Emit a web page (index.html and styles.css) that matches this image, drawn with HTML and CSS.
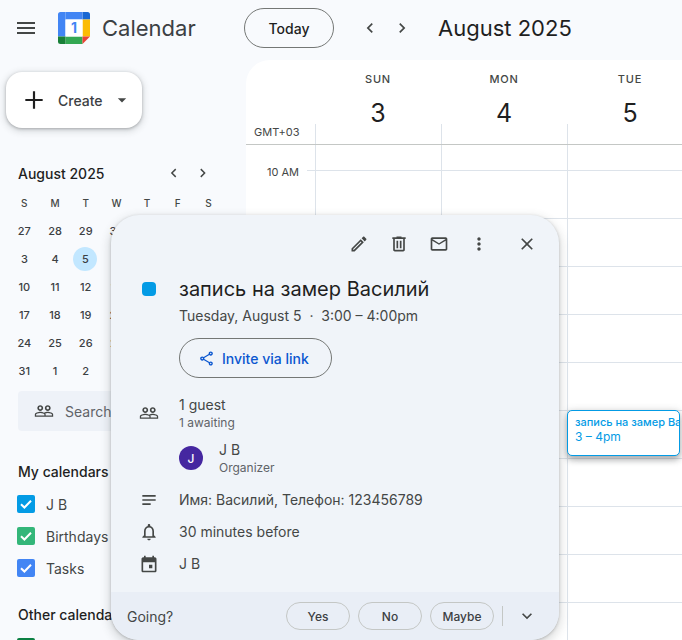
FILE: index.html
```html
<!DOCTYPE html>
<html lang="en">
<head>
  <meta charset="UTF-8" />
  <title>Calendar – August 2025</title>
  <link rel="stylesheet" href="styles.css">
</head>
<body>

  <header class="topbar">
    <button class="icon-btn menu-btn"><svg class="icon" viewBox="0 0 24 24"><path d="M3 18h18v-2H3v2zm0-5h18v-2H3v2zm0-7v2h18V6H3z"/></svg></button>
    <svg class="logo" viewBox="0 0 32 32">
      <path fill="#4285f4" d="M2.5 0H7.5V24.5H0V2.5A2.5 2.5 0 0 1 2.5 0z"/>
      <path fill="#1967d2" d="M24.5 0h5A2.5 2.5 0 0 1 32 2.5V7.5H24.5z"/>
      <rect fill="#4285f4" x="7.5" width="17" height="7.5"/>
      <rect fill="#fbbc04" x="24.5" y="7.5" width="7.5" height="17"/>
      <rect fill="#34a853" x="7.5" y="24.5" width="17" height="7.5"/>
      <path fill="#188038" d="M0 24.5H7.5V32H2.5A2.5 2.5 0 0 1 0 29.5z"/>
      <path fill="#ea4335" d="M24.5 24.5H32L24.5 32z"/>
      <rect fill="#fff" x="7.5" y="7.5" width="17" height="17"/>
      <text class="logo-num" x="16" y="21">1</text>
    </svg>
    <span class="brand">Calendar</span>
    <button class="today-btn">Today</button>
    <button class="icon-btn nav-btn"><svg class="icon" viewBox="0 0 24 24"><path d="M15.41 7.41L14 6l-6 6 6 6 1.41-1.41L10.83 12z"/></svg></button>
    <button class="icon-btn nav-btn"><svg class="icon" viewBox="0 0 24 24"><path d="M10 6L8.59 7.41 13.17 12l-4.58 4.59L10 18l6-6z"/></svg></button>
    <span class="period">August 2025</span>
  </header>

  <div class="layout">
    <aside class="sidebar">
      <button class="create-btn">
        <svg class="plus" viewBox="0 0 24 24"><path d="M20 13h-7v7h-2v-7H4v-2h7V4h2v7h7z"/></svg>
        <span>Create</span>
        <svg class="caret" viewBox="0 0 24 24"><path d="M7 10l5 5 5-5z"/></svg>
      </button>

      <div class="mini-head">
        <span class="mini-title">August 2025</span>
        <svg class="mini-nav" viewBox="0 0 24 24"><path d="M15.41 7.41L14 6l-6 6 6 6 1.41-1.41L10.83 12z"/></svg>
        <svg class="mini-nav" viewBox="0 0 24 24"><path d="M10 6L8.59 7.41 13.17 12l-4.58 4.59L10 18l6-6z"/></svg>
      </div>
      <div class="mini-grid">
        <span class="dow">S</span><span class="dow">M</span><span class="dow">T</span><span class="dow">W</span><span class="dow">T</span><span class="dow">F</span><span class="dow">S</span>
        <span>27</span><span>28</span><span>29</span><span>30</span><span>31</span><span>1</span><span>2</span>
        <span>3</span><span>4</span><span class="picked">5</span><span>6</span><span>7</span><span>8</span><span>9</span>
        <span>10</span><span>11</span><span>12</span><span>13</span><span>14</span><span>15</span><span>16</span>
        <span>17</span><span>18</span><span>19</span><span>20</span><span>21</span><span>22</span><span>23</span>
        <span>24</span><span>25</span><span>26</span><span>27</span><span>28</span><span>29</span><span>30</span>
        <span>31</span><span>1</span><span>2</span><span>3</span><span>4</span><span>5</span><span>6</span>
      </div>

      <div class="people-search">
        <svg class="icon" viewBox="0 0 24 24"><use href="#people"/></svg>
        <span>Search for people</span>
      </div>

      <h3 class="cal-title">My calendars</h3>
      <label class="cal-item"><span class="check c-blue"><svg viewBox="0 0 18 18"><path d="M4 9.2l3.4 3.3L14 5.8"/></svg></span>J B</label>
      <label class="cal-item"><span class="check c-green"><svg viewBox="0 0 18 18"><path d="M4 9.2l3.4 3.3L14 5.8"/></svg></span>Birthdays</label>
      <label class="cal-item"><span class="check c-task"><svg viewBox="0 0 18 18"><path d="M4 9.2l3.4 3.3L14 5.8"/></svg></span>Tasks</label>

      <h3 class="cal-title other">Other calendars</h3>
      <label class="cal-item"><span class="check c-dark"><svg viewBox="0 0 18 18"><path d="M4 9.2l3.4 3.3L14 5.8"/></svg></span>Holidays</label>
    </aside>

    <main class="week">
      <div class="day-heads">
        <div class="day-head"><span class="dow-name">SUN</span><span class="day-num">3</span></div>
        <div class="day-head"><span class="dow-name">MON</span><span class="day-num">4</span></div>
        <div class="day-head"><span class="dow-name">TUE</span><span class="day-num">5</span></div>
      </div>
      <div class="allday">
        <span class="tz">GMT+03</span>
        <div class="cell"></div><div class="cell"></div><div class="cell"></div>
      </div>
      <div class="stub">
        <div class="cell"></div><div class="cell"></div><div class="cell"></div>
      </div>
      <div class="hour"><span class="hour-label">10 AM</span><div class="tick"></div><div class="cell"></div><div class="cell"></div><div class="cell"></div></div>
      <div class="hour"><span class="hour-label"></span><div class="tick"></div><div class="cell"></div><div class="cell"></div><div class="cell"></div></div>
      <div class="hour"><span class="hour-label"></span><div class="tick"></div><div class="cell"></div><div class="cell"></div><div class="cell"></div></div>
      <div class="hour"><span class="hour-label"></span><div class="tick"></div><div class="cell"></div><div class="cell"></div><div class="cell"></div></div>
      <div class="hour"><span class="hour-label"></span><div class="tick"></div><div class="cell"></div><div class="cell"></div><div class="cell"></div></div>
      <div class="hour"><span class="hour-label"></span><div class="tick"></div><div class="cell"></div><div class="cell"></div><div class="cell"></div></div>
      <div class="hour"><span class="hour-label"></span><div class="tick"></div><div class="cell"></div><div class="cell"></div><div class="cell"></div></div>
      <div class="hour"><span class="hour-label"></span><div class="tick"></div><div class="cell"></div><div class="cell"></div><div class="cell"></div></div>
      <div class="hour"><span class="hour-label"></span><div class="tick"></div><div class="cell"></div><div class="cell"></div><div class="cell"></div></div>
      <div class="hour"><span class="hour-label"></span><div class="tick"></div><div class="cell"></div><div class="cell"></div><div class="cell"></div></div>
    </main>
  </div>

  <div class="event-chip">
    <div class="chip-title">запись на замер Василий</div>
    <div class="chip-time">3 – 4pm</div>
  </div>

  <section class="popup">
    <div class="popup-tools">
      <svg class="icon" viewBox="0 0 24 24"><path d="M14.06 9.02l.92.92L5.92 19H5v-.92l9.06-9.06M17.66 3c-.25 0-.51.1-.7.29l-1.83 1.83 3.75 3.75 1.83-1.83c.39-.39.39-1.02 0-1.41l-2.34-2.34c-.2-.2-.45-.29-.71-.29zm-3.6 3.19L3 17.25V21h3.75L17.81 9.94l-3.75-3.75z"/></svg>
      <svg class="icon" viewBox="0 0 24 24"><path d="M15 4V3H9v1H4v2h1v13c0 1.1.9 2 2 2h10c1.1 0 2-.9 2-2V6h1V4h-5zm2 15H7V6h10v13zM9 8h2v9H9zm4 0h2v9h-2z"/></svg>
      <svg class="icon" viewBox="0 0 24 24"><path d="M22 6c0-1.1-.9-2-2-2H4c-1.1 0-2 .9-2 2v12c0 1.1.9 2 2 2h16c1.1 0 2-.9 2-2V6zm-2 0l-8 5-8-5h16zm0 12H4V8l8 5 8-5v10z"/></svg>
      <svg class="icon" viewBox="0 0 24 24"><path d="M12 8c1.1 0 2-.9 2-2s-.9-2-2-2-2 .9-2 2 .9 2 2 2zm0 2c-1.1 0-2 .9-2 2s.9 2 2 2 2-.9 2-2-.9-2-2-2zm0 6c-1.1 0-2 .9-2 2s.9 2 2 2 2-.9 2-2-.9-2-2-2z"/></svg>
      <svg class="icon close" viewBox="0 0 24 24"><path d="M19 6.41L17.59 5 12 10.59 6.41 5 5 6.41 10.59 12 5 17.59 6.41 19 12 13.41 17.59 19 19 17.59 13.41 12z"/></svg>
    </div>

    <div class="popup-body">
      <div class="row title-row">
        <div class="row-icon"><span class="color-dot"></span></div>
        <div>
          <h2 class="event-title">запись на замер Василий</h2>
          <p class="event-when">Tuesday, August 5 &nbsp;·&nbsp; 3:00 – 4:00pm</p>
        </div>
      </div>

      <button class="invite-btn">
        <svg viewBox="0 0 24 24"><path d="M18 16.08c-.76 0-1.44.3-1.96.77L8.91 12.7c.05-.23.09-.46.09-.7s-.04-.47-.09-.7l7.05-4.11c.54.5 1.25.81 2.04.81 1.66 0 3-1.34 3-3s-1.34-3-3-3-3 1.34-3 3c0 .24.04.47.09.7L8.04 9.81C7.5 9.31 6.79 9 6 9c-1.66 0-3 1.34-3 3s1.34 3 3 3c.79 0 1.5-.31 2.04-.81l7.12 4.16c-.05.21-.08.43-.08.65 0 1.61 1.31 2.92 2.92 2.92 1.61 0 2.92-1.31 2.92-2.92s-1.31-2.92-2.92-2.92zM18 4c.55 0 1 .45 1 1s-.45 1-1 1-1-.45-1-1 .45-1 1-1zM6 13c-.55 0-1-.45-1-1s.45-1 1-1 1 .45 1 1-.45 1-1 1zm12 7.02c-.55 0-1-.45-1-1s.45-1 1-1 1 .45 1 1-.45 1-1 1z"/></svg>
        Invite via link
      </button>

      <div class="row guests-row">
        <div class="row-icon"><svg class="icon" viewBox="0 0 24 24"><use href="#people"/></svg></div>
        <div>
          <div class="line">1 guest</div>
          <div class="sub">1 awaiting</div>
        </div>
      </div>

      <div class="organizer">
        <span class="avatar">J</span>
        <div>
          <div class="line">J B</div>
          <div class="sub">Organizer</div>
        </div>
      </div>

      <div class="row info-row">
        <div class="row-icon"><svg class="icon" viewBox="0 0 24 24"><path d="M4 6h16v2H4zm0 5h16v2H4zm0 5h10v2H4z"/></svg></div>
        <div class="line">Имя: Василий, Телефон: 123456789</div>
      </div>
      <div class="row info-row">
        <div class="row-icon"><svg class="icon" viewBox="0 0 24 24"><path d="M12 22c1.1 0 2-.9 2-2h-4c0 1.1.9 2 2 2zm6-6v-5c0-3.07-1.63-5.64-4.5-6.32V4c0-.83-.67-1.5-1.5-1.5s-1.5.67-1.5 1.5v.68C7.64 5.36 6 7.92 6 11v5l-2 2v1h16v-1l-2-2zm-2 1H8v-6c0-2.48 1.51-4.5 4-4.5s4 2.02 4 4.5v6z"/></svg></div>
        <div class="line">30 minutes before</div>
      </div>
      <div class="row info-row">
        <div class="row-icon"><svg class="icon" viewBox="0 0 24 24"><path d="M19 4h-1V2h-2v2H8V2H6v2H5c-1.1 0-2 .9-2 2v14c0 1.1.9 2 2 2h14c1.1 0 2-.9 2-2V6c0-1.1-.9-2-2-2zm0 16H5V10h14v10zm-7-7h4v4h-4z"/></svg></div>
        <div class="line">J B</div>
      </div>
    </div>

    <div class="popup-foot">
      <span class="going">Going?</span>
      <button class="rsvp">Yes</button>
      <button class="rsvp">No</button>
      <button class="rsvp">Maybe</button>
      <span class="foot-sep"></span>
      <svg class="icon" viewBox="0 0 24 24"><path d="M16.59 8.59L12 13.17 7.41 8.59 6 10l6 6 6-6z"/></svg>
    </div>
  </section>

  <svg class="defs" aria-hidden="true">
    <symbol id="people" viewBox="0 0 24 24"><path d="M16.5 13c-1.2 0-3.07.34-4.5 1-1.43-.67-3.3-1-4.5-1C5.33 13 1 14.08 1 16.25V19h22v-2.75c0-2.17-4.33-3.25-6.5-3.25zm-4 4.5h-10v-1.25c0-.54 2.56-1.75 5-1.75s5 1.21 5 1.75v1.25zm9 0H14v-1.25c0-.46-.2-.86-.52-1.22.88-.3 1.96-.53 3.02-.53 2.44 0 5 1.21 5 1.75v1.25zM7.5 12c1.93 0 3.5-1.57 3.5-3.5S9.43 5 7.5 5 4 6.57 4 8.5 5.57 12 7.5 12zm0-5c.83 0 1.5.67 1.5 1.5S8.33 10 7.5 10 6 9.33 6 8.5 6.67 7 7.5 7zm9 5c1.93 0 3.5-1.57 3.5-3.5S18.43 5 16.5 5 13 6.57 13 8.5s1.57 3.5 3.5 3.5zm0-5c.83 0 1.5.67 1.5 1.5s-.67 1.5-1.5 1.5S15 9.33 15 8.5 15.67 7 16.5 7z"/></symbol>
  </svg>

</body>
</html>
```

FILE: styles.css
```css
* {
  box-sizing: border-box;
}
html, body {
  height: 640px;
  overflow: hidden;
}
body {
  margin: 0;
  position: relative;
  background-color: #f8fafd;
  color: #1f1f1f;
  font-family: Inter, Roboto, sans-serif;
}
button {
  font-family: inherit;
  background: none;
  border: none;
  padding: 0;
  color: inherit;
}
.defs {
  position: absolute;
  width: 0;
  height: 0;
}
.icon {
  width: 20px;
  height: 20px;
  fill: #444746;
  display: block;
  flex: none;
}

/* top bar */
.topbar {
  height: 60px;
  display: flex;
  align-items: flex-start;
  padding: 8px 0 0 14px;
}
.icon-btn {
  width: 24px;
  height: 40px;
  display: flex;
  align-items: center;
  justify-content: center;
}
.menu-btn .icon {
  width: 24px;
  height: 24px;
}
.logo {
  width: 32px;
  height: 32px;
  margin: 4px 0 0 20px;
  flex: none;
}
.logo-num {
  font-size: 14px;
  font-weight: 700;
  fill: #4285f4;
  text-anchor: middle;
}
.brand {
  margin-left: 12px;
  font-size: 22px;
  line-height: 40px;
  color: #3c4043;
  width: 142px;
}
.today-btn {
  width: 90px;
  height: 40px;
  border: 1px solid #747775;
  border-radius: 20px;
  font-size: 14px;
  font-weight: 500;
  margin-right: 24px;
}
.nav-btn + .nav-btn {
  margin-left: 8px;
}
.period {
  margin-left: 24px;
  font-size: 22px;
  line-height: 40px;
  color: #1f1f1f;
}

.layout {
  display: flex;
  align-items: flex-start;
}

/* sidebar */
.sidebar {
  width: 246px;
  flex: none;
  padding-top: 12px;
}
.create-btn {
  margin-left: 6px;
  width: 136px;
  height: 56px;
  background-color: #fff;
  border-radius: 16px;
  box-shadow: 0 1px 3px rgba(60, 64, 67, .35), 0 2px 6px 2px rgba(60, 64, 67, .15);
  display: flex;
  align-items: center;
  padding-left: 15px;
  font-size: 14px;
  font-weight: 500;
  color: #3c4043;
}
.plus {
  width: 26px;
  height: 26px;
  fill: #1f1f1f;
  margin-right: 11px;
}
.caret {
  width: 20px;
  height: 20px;
  fill: #444746;
  margin-left: 9px;
}
.mini-head {
  display: flex;
  align-items: center;
  width: 224px;
  margin-top: 35px;
  padding-left: 18px;
  height: 20px;
}
.mini-title {
  font-size: 14px;
  font-weight: 500;
  width: 151px;
}
.mini-nav {
  width: 18px;
  height: 18px;
  fill: #444746;
  margin-right: 12px;
}
.mini-grid {
  width: 216px;
  margin: 6px 0 0 9px;
  display: grid;
  grid-template-columns: repeat(7, 30.7px);
  grid-auto-rows: 28px;
  font-size: 11px;
  font-weight: 500;
  color: #3c4043;
}
.mini-grid span {
  display: flex;
  align-items: center;
  justify-content: center;
}
.mini-grid .dow {
  font-size: 10px;
  color: #444746;
}
.mini-grid .picked {
  background-color: #c2e7ff;
  border-radius: 50%;
  width: 24px;
  height: 24px;
  margin: 2px 0 0 3px;
}
.people-search {
  margin: 6px 0 0 18px;
  width: 210px;
  height: 40px;
  border-radius: 4px;
  background-color: #eef2f8;
  display: flex;
  align-items: center;
  gap: 11px;
  padding-left: 16px;
  font-size: 14px;
  color: #5f6368;
  white-space: nowrap;
  overflow: hidden;
}
.cal-title {
  margin: 31px 0 0 18px;
  font-size: 14px;
  font-weight: 500;
  line-height: 20px;
  height: 26px;
  color: #1f1f1f;
}
.cal-title.other {
  margin-top: 21px;
}
.cal-item {
  display: flex;
  align-items: center;
  height: 32px;
  padding-left: 17px;
  gap: 11px;
  font-size: 14px;
  color: #444746;
}
.check {
  width: 18px;
  height: 18px;
  border-radius: 2px;
  flex: none;
}
.check svg {
  display: block;
  fill: none;
  stroke: #fff;
  stroke-width: 2;
}
.c-blue {
  background-color: #039be5;
}
.c-green {
  background-color: #33b679;
}
.c-task {
  background-color: #4285f4;
}
.c-dark {
  background-color: #0b8043;
}

/* week grid */
.week {
  flex: 1;
  background-color: #fff;
  border-radius: 24px 0 0 0;
  height: 580px;
  overflow: hidden;
}
.day-heads {
  display: grid;
  grid-template-columns: repeat(3, 126px);
  padding-left: 69px;
  height: 64px;
}
.day-head {
  display: flex;
  flex-direction: column;
  align-items: center;
}
.dow-name {
  margin-top: 12px;
  font-size: 11px;
  font-weight: 500;
  letter-spacing: .8px;
  line-height: 14px;
  color: #444746;
}
.day-num {
  margin-top: 8px;
  font-size: 25px;
  line-height: 38px;
  color: #1f1f1f;
}
.allday {
  display: grid;
  grid-template-columns: 69px repeat(3, 126px);
  height: 21px;
  border-bottom: 1px solid #c4c7c5;
}
.tz {
  font-size: 11px;
  color: #444746;
  padding: 1px 0 0 8px;
  line-height: 14px;
}
.cell {
  border-left: 1px solid #dde3ea;
}
.stub {
  display: grid;
  grid-template-columns: repeat(3, 126px);
  padding-left: 69px;
  height: 25px;
}
.hour {
  display: grid;
  grid-template-columns: 61px 8px repeat(3, 126px);
  height: 48px;
}
.hour .cell, .tick {
  border-top: 1px solid #dde3ea;
}
.hour-label {
  font-size: 11px;
  color: #444746;
  text-align: right;
  padding-right: 8px;
  line-height: 14px;
  margin-top: -5px;
  position: relative;
  top: 0;
}

/* event block behind the popup */
.event-chip {
  position: absolute;
  left: 567px;
  top: 410px;
  width: 113px;
  height: 46px;
  background-color: #fff;
  border: 1px solid #039be5;
  border-radius: 5px;
  box-shadow: 0 4px 6px rgba(60, 64, 67, .35), 0 1px 8px rgba(60, 64, 67, .2);
  padding: 4px 0 0 7px;
  color: #039be5;
  overflow: hidden;
  white-space: nowrap;
}
.chip-title {
  font-size: 11px;
  font-weight: 500;
  line-height: 14px;
  overflow: hidden;
}
.chip-time {
  font-size: 12px;
  line-height: 16px;
}

/* event popup */
.popup {
  position: absolute;
  left: 111px;
  top: 215px;
  width: 448px;
  height: 425px;
  background-color: #f0f4f9;
  border-radius: 28px;
  box-shadow: 0 4px 8px 3px rgba(60, 64, 67, .15), 0 1px 3px rgba(60, 64, 67, .3);
  display: flex;
  flex-direction: column;
  overflow: hidden;
}
.popup-tools {
  display: flex;
  gap: 20px;
  justify-content: flex-end;
  align-items: center;
  padding: 19px 22px 0 0;
  height: 39px;
}
.popup-tools .close {
  margin-left: 8px;
}
.popup-body {
  flex: 1;
  padding-top: 22px;
}
.row {
  display: flex;
}
.row-icon {
  width: 68px;
  flex: none;
  display: flex;
  justify-content: center;
  padding-left: 8px;
}
.color-dot {
  width: 14px;
  height: 14px;
  border-radius: 4px;
  background-color: #039be5;
  margin-top: 6px;
}
.event-title {
  margin: 0;
  font-size: 20px;
  font-weight: 400;
  line-height: 26px;
  white-space: nowrap;
}
.event-when {
  margin: 4px 0 0;
  font-size: 14px;
  line-height: 20px;
  color: #444746;
}
.invite-btn {
  display: flex;
  align-items: center;
  gap: 7px;
  margin: 12px 0 0 68px;
  width: 153px;
  height: 40px;
  padding-left: 18px;
  border: 1px solid #747775;
  border-radius: 20px;
  font-size: 14px;
  font-weight: 500;
  color: #0b57d0;
}
.invite-btn svg {
  width: 17px;
  height: 17px;
  fill: #0b57d0;
}
.guests-row {
  margin-top: 17px;
  align-items: center;
}
.line {
  font-size: 14px;
  line-height: 20px;
  color: #444746;
}
.sub {
  font-size: 12px;
  line-height: 16px;
  color: #5f6368;
}
.organizer {
  display: flex;
  align-items: center;
  gap: 16px;
  margin: 9px 0 0 68px;
}
.avatar {
  width: 24px;
  height: 24px;
  border-radius: 50%;
  background-color: #4527a0;
  color: #fff;
  font-size: 12px;
  font-weight: 500;
  display: flex;
  align-items: center;
  justify-content: center;
}
.info-row {
  height: 32px;
  align-items: center;
}
.organizer + .info-row {
  margin-top: 8px;
}
.popup-foot {
  height: 48px;
  background-color: #e9eef6;
  display: flex;
  align-items: center;
  padding: 0 22px 0 16px;
}
.going {
  font-size: 14px;
  color: #444746;
  width: 159px;
}
.rsvp {
  width: 64px;
  height: 28px;
  margin-right: 8px;
  border: 1px solid #c4c7c5;
  border-radius: 14px;
  font-size: 12px;
  font-weight: 500;
  color: #3c4043;
}
.foot-sep {
  width: 1px;
  height: 20px;
  background-color: #c4c7c5;
  margin-right: 14px;
}
```
